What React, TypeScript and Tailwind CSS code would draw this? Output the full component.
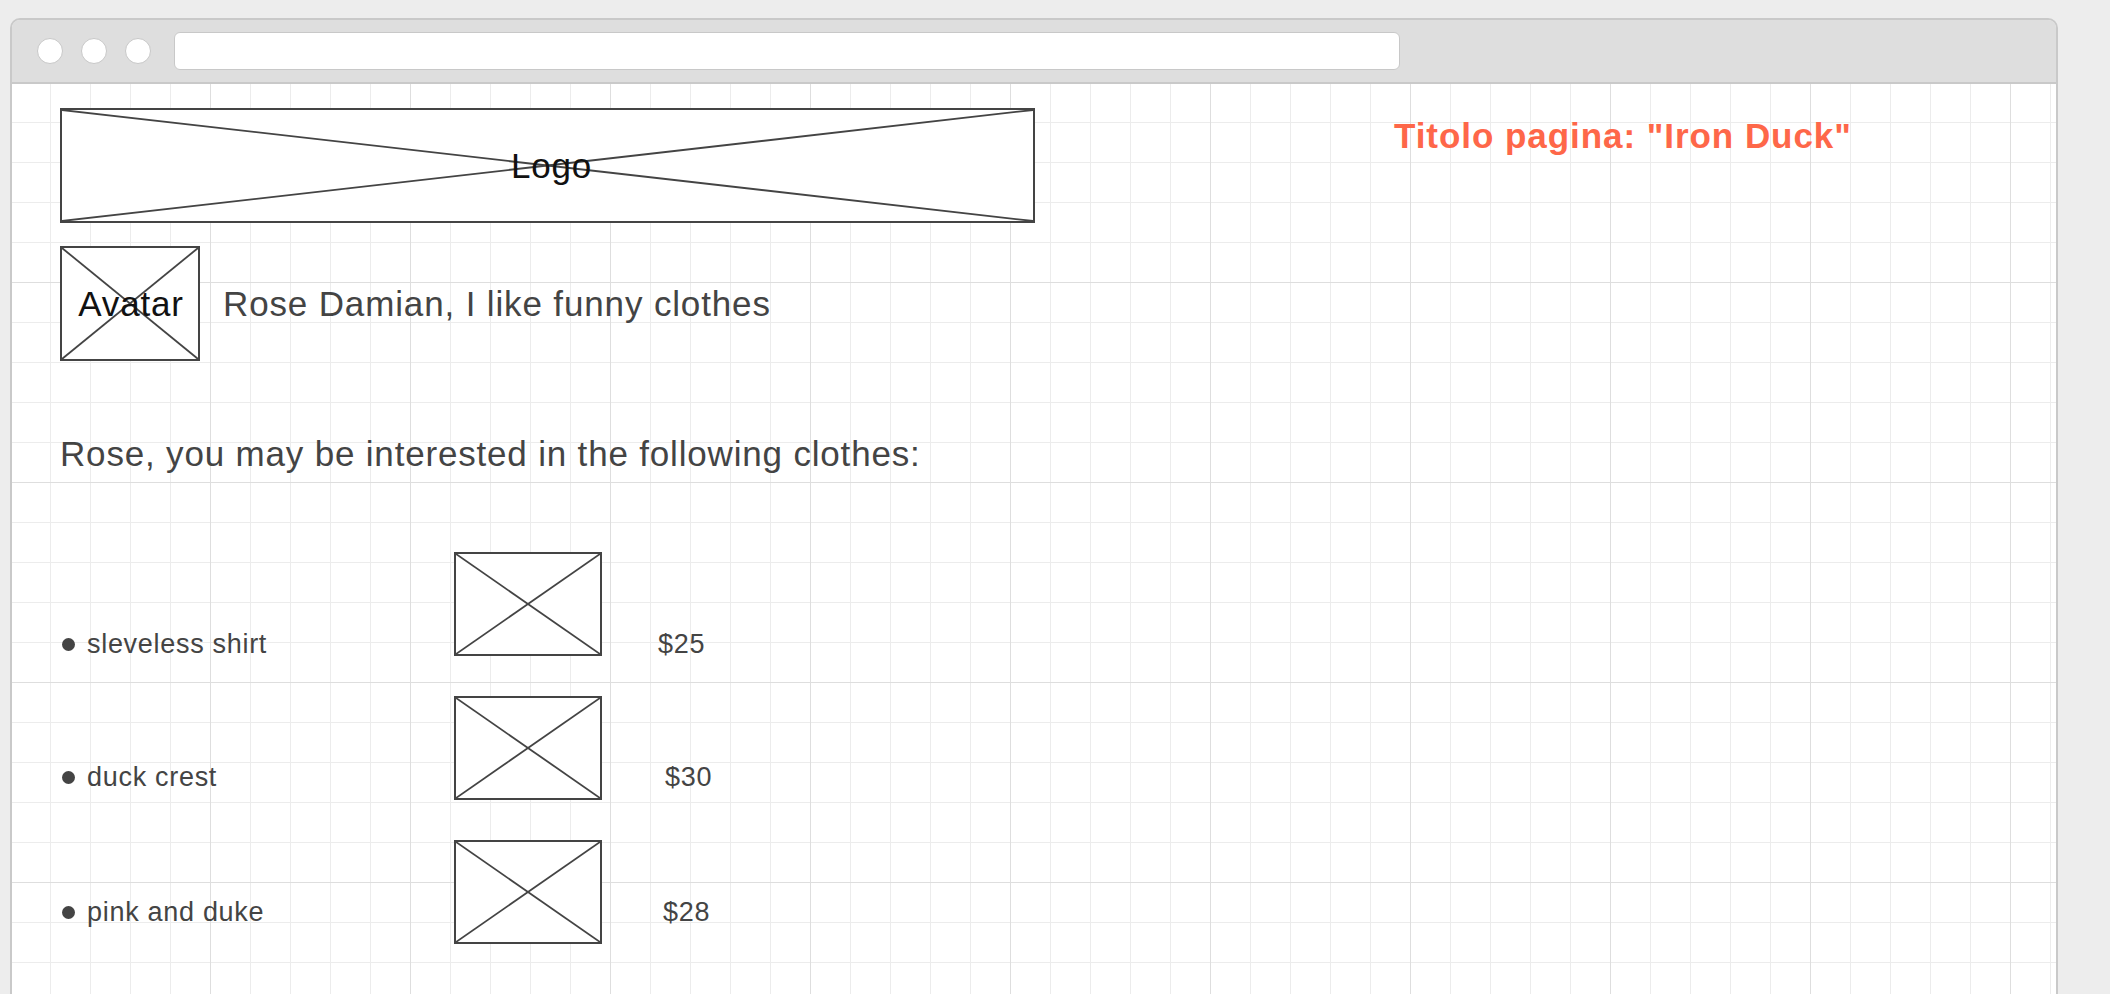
import React from 'react'

interface Item {
  name: string
  price: string
  textPad: string
  priceGap: string
}

// wireframe items are hand-placed, so each row keeps its own offsets
const items: Item[] = [
  { name: 'sleveless shirt', price: '$25', textPad: 'pt-[76px]', priceGap: 'ml-[56px]' },
  { name: 'duck crest', price: '$30', textPad: 'pt-[65px]', priceGap: 'ml-[63px]' },
  { name: 'pink and duke', price: '$28', textPad: 'pt-[56px]', priceGap: 'ml-[61px]' },
]

const Cross: React.FC = () => (
  <svg
    className="absolute inset-0 h-full w-full"
    viewBox="0 0 100 100"
    preserveAspectRatio="none"
  >
    <line x1="0" y1="0" x2="100" y2="100" stroke="#444" strokeWidth={1.8} vectorEffect="non-scaling-stroke" />
    <line x1="100" y1="0" x2="0" y2="100" stroke="#444" strokeWidth={1.8} vectorEffect="non-scaling-stroke" />
  </svg>
)

const Placeholder: React.FC<{ className?: string; children?: React.ReactNode }> = ({ className = '', children }) => (
  <div className={`relative flex shrink-0 items-center justify-center border-2 border-[#444] bg-white ${className}`}>
    <Cross />
    {children && (
      <span className="relative text-[35px] leading-[40px] tracking-[0.8px] text-[#111]">{children}</span>
    )}
  </div>
)

const TrafficLight: React.FC = () => (
  <div className="h-[26px] w-[26px] rounded-full border-[1.5px] border-[#c8c8c8] bg-white" />
)

export default function App() {
  return (
    <div className="h-[994px] w-[2110px] overflow-hidden bg-[#ededed] pl-[10px] pt-[18px] font-['Liberation_Sans',Arial,sans-serif]">
      <div className="flex h-[1000px] w-[2048px] flex-col overflow-hidden rounded-t-[10px] border-2 border-[#c9c9c9]">
        {/* Title bar */}
        <div className="flex h-[64px] shrink-0 items-center border-b-2 border-[#c9c9c9] bg-[#dedede] pl-[25px]">
          <div className="flex gap-[18px]">
            <TrafficLight />
            <TrafficLight />
            <TrafficLight />
          </div>
          <div className="ml-[23px] h-[38px] w-[1226px] rounded-[6px] border-[1.5px] border-[#c8c8c8] bg-white" />
        </div>

        {/* Page */}
        <div className="flex-1 bg-white bg-[image:linear-gradient(to_right,#dedede_1px,transparent_1px),linear-gradient(to_bottom,#dedede_1px,transparent_1px),linear-gradient(to_right,#ececec_1px,transparent_1px),linear-gradient(to_bottom,#ececec_1px,transparent_1px)] bg-[size:200px_200px,200px_200px,40px_40px,40px_40px] bg-[position:-2px_-2px] pl-[48px] pt-[24px]">
          <div className="flex items-start">
            <Placeholder className="h-[115px] w-[975px] pl-[8px]">Logo</Placeholder>
            <h1 className="ml-[359px] mt-[8px] text-[35px] font-bold leading-[40px] tracking-[0.95px] text-[#fe6749]">
              Titolo pagina: "Iron Duck"
            </h1>
          </div>

          <div className="mt-[23px] flex items-center">
            <Placeholder className="h-[115px] w-[140px] pl-[2px]">Avatar</Placeholder>
            <p className="ml-[23px] text-[35px] leading-[40px] tracking-[0.86px] text-[#444]">
              Rose Damian, I like funny clothes
            </p>
          </div>

          <p className="mt-[73px] text-[35px] leading-[40px] tracking-[0.82px] text-[#444]">
            Rose, you may be interested in the following clothes:
          </p>

          <div className="mt-[78px]">
            {items.map((item) => (
              <div key={item.name} className="flex h-[144px] items-start">
                <div className={`flex w-[394px] items-center gap-[12px] ${item.textPad}`}>
                  <span className="ml-[2px] h-[13px] w-[13px] rounded-full bg-[#444]" />
                  <span className="text-[27px] leading-[32px] tracking-[0.7px] text-[#444]">{item.name}</span>
                </div>
                <Placeholder className="h-[104px] w-[148px]" />
                <span className={`${item.textPad} ${item.priceGap} text-[27px] leading-[32px] tracking-[0.7px] text-[#444]`}>
                  {item.price}
                </span>
              </div>
            ))}
          </div>
        </div>
      </div>
    </div>
  )
}
